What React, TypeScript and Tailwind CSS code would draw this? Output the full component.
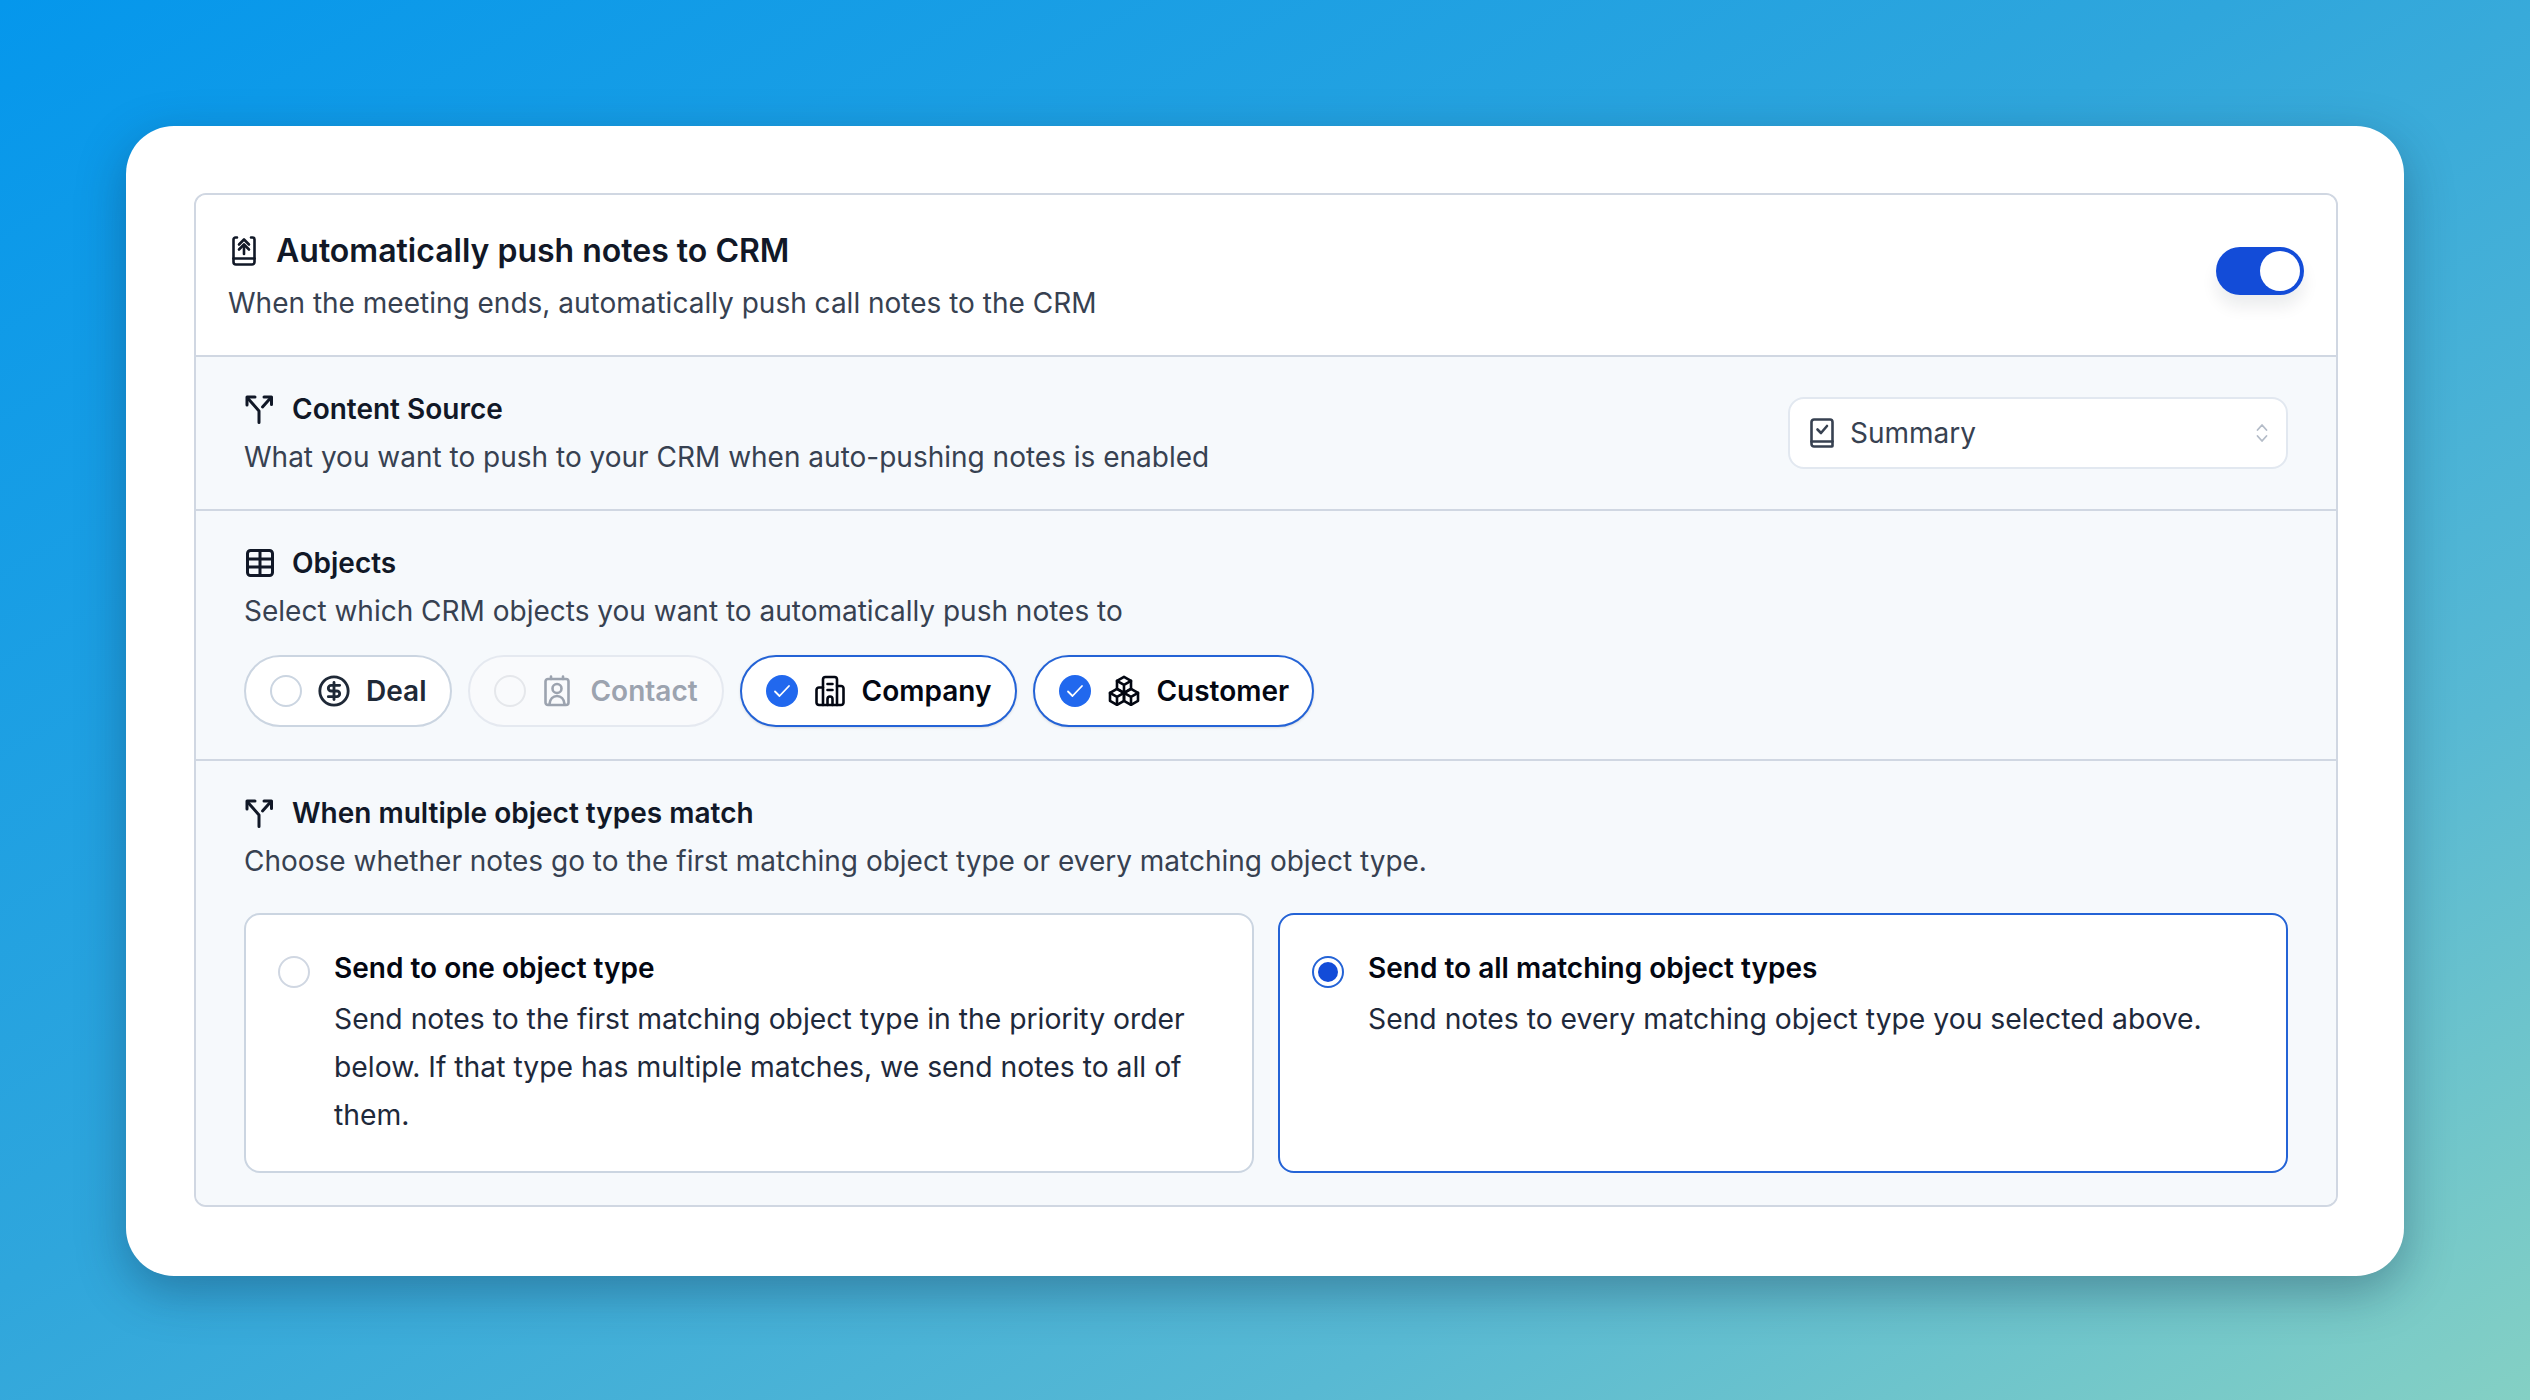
import { CircleDollarSign } from 'lucide-react'

function Ico({ w, h, children, className }: { w: number; h: number; children: React.ReactNode; className?: string }) {
  return (
    <svg width={w} height={h} viewBox={`0 0 ${w} ${h}`} fill="none" stroke="currentColor" strokeWidth={2.6} strokeLinecap="round" strokeLinejoin="round" className={`shrink-0 ${className ?? ''}`}>
      {children}
    </svg>
  )
}

function BookUpIcon() {
  return (
    <Ico w={26} h={32} className="ml-[3px] text-[#111827]">
      <path d="M6 2.500H4.500A2 2 0 0 0 2.500 4.500V27a2.500 2.500 0 0 0 2.500 2.500h16a2.500 2.500 0 0 0 2.500-2.500V4.500a2 2 0 0 0-2-2H20" />
      <path d="M2.500 23.500h21" />
      <path d="M8 9.500l5-5 5 5" />
      <path d="M8 14.500l5-5 5 5" />
      <path d="M13 10v9" />
    </Ico>
  )
}

function SplitIcon() {
  return (
    <Ico w={30} h={30} className="text-[#111827]">
      <path d="M15 28.500V17L4 4.500" strokeWidth={3} />
      <path d="M3 11V3h8" strokeWidth={3} />
      <path d="M18.500 13L27 3.500" strokeWidth={3} />
      <path d="M20 3h7.500v7.500" strokeWidth={3} />
    </Ico>
  )
}

function TableIcon() {
  return (
    <Ico w={28} h={28} className="ml-[2px] text-[#111827]">
      <g strokeWidth={3}>
        <rect x="1.500" y="1.500" width="25" height="25" rx="3" />
        <path d="M1.500 10h25M1.500 18h25M14 1.500v25" />
      </g>
    </Ico>
  )
}

function BookCheckIcon() {
  return (
    <Ico w={24} h={30} className="text-[#374151]">
      <path d="M4 1.500h16a2.500 2.500 0 0 1 2.500 2.500v24a.5.5 0 0 1-.5.5H4A2.500 2.500 0 0 1 1.500 26V4A2.500 2.500 0 0 1 4 1.500z" />
      <path d="M1.500 23.500h21" />
      <path d="M7.500 11.500l3.500 3.500 6-7" />
    </Ico>
  )
}

function ChevronsIcon() {
  return (
    <Ico w={12} h={20} className="text-[#b4bcc8]">
      <g strokeWidth={1.800}>
        <path d="M1.500 7L6 2l4.500 5" />
        <path d="M1.500 13l4.500 5 4.500-5" />
      </g>
    </Ico>
  )
}

function ContactIcon() {
  return (
    <Ico w={26} h={32} className="text-[#9ca3af]">
      <rect x="1.500" y="4" width="23" height="26" rx="2.500" />
      <path d="M7 1.500v2.500M19 1.500v2.500" />
      <circle cx="13" cy="13.500" r="4.500" />
      <path d="M5.500 29c.5-5 3.500-8 7.500-8s7 3 7.500 8" />
    </Ico>
  )
}

function BuildingIcon() {
  return (
    <Ico w={30} h={32} className="text-[#030712]">
      <path d="M8 30H4a2.500 2.500 0 0 1-2.500-2.500V15A2.500 2.500 0 0 1 4 12.500h4" />
      <path d="M22 11h4a2.500 2.500 0 0 1 2.500 2.500v14A2.500 2.500 0 0 1 26 30h-4" />
      <path d="M8 30V4.500A2.500 2.500 0 0 1 10.500 2h9A2.500 2.500 0 0 1 22 4.500V30z" />
      <path d="M12.500 9h5M12.500 15h5" />
      <path d="M12.500 30v-6a2.500 2.500 0 0 1 5 0v6" />
    </Ico>
  )
}

function CubesIcon() {
  return (
    <Ico w={32} h={32} className="text-[#030712]">
      <path d="M16 1.800l7 4v8l-7 4-7-4v-8z" />
      <path d="M9 5.800l7 4 7-4M16 9.800v8" />
      <path d="M9 13.800l7 4v8l-7 4-7-4v-8z" />
      <path d="M2 17.800l7 4 7-4M9 21.800v8" />
      <path d="M23 13.800l7 4v8l-7 4-7-4v-8z" />
      <path d="M16 17.800l7 4 7-4M23 21.800v8" />
    </Ico>
  )
}

function CheckDot() {
  return (
    <span className="flex h-8 w-8 shrink-0 items-center justify-center rounded-full bg-[#2168ee]">
      <svg width="18" height="14" viewBox="0 0 18 14" fill="none" stroke="white" strokeWidth={1.800} strokeLinecap="round" strokeLinejoin="round">
        <path d="M2 7.500l4.500 4.500L16 2" />
      </svg>
    </span>
  )
}

function SectionHead({ icon, title, desc }: { icon: React.ReactNode; title: string; desc: string }) {
  return (
    <div>
      <div className="flex h-9 items-center gap-[18px]">
        {icon}
        <h3 className="text-[28px] leading-9 font-semibold text-[#111827]">{title}</h3>
      </div>
      <p className="mt-3 text-[28px] leading-9 text-[#374151]">{desc}</p>
    </div>
  )
}

export default function App() {
  return (
    <div className="flex h-screen w-full items-center justify-center bg-[linear-gradient(150deg,#0597ec_0%,#2fa6dc_45%,#58b9d3_75%,#84d0c4_100%)] pt-[2px] font-[family-name:Inter,sans-serif]">
      <div className="w-[2278px] rounded-[48px] bg-white pt-[67px] pr-[66px] pb-[69px] pl-[68px] shadow-[0_16px_48px_rgba(15,40,70,0.35)]">
        <div className="overflow-hidden rounded-[12px] border-2 border-[#d0d7e2]">
          {/* Header */}
          <div className="flex items-center justify-between bg-white pt-[36px] pr-[32px] pb-[34px] pl-[32px]">
            <div>
              <div className="flex h-10 items-center gap-[19px]">
                <BookUpIcon />
                <h2 className="text-[32px] leading-10 font-semibold text-[#111827]">Automatically push notes to CRM</h2>
              </div>
              <p className="mt-[14px] text-[28px] leading-9 text-[#374151]">When the meeting ends, automatically push call notes to the CRM</p>
            </div>
            <div className="mb-[10px] flex h-12 w-[88px] items-center justify-end rounded-full bg-[#134cd8] pr-1 shadow-[0_12px_16px_rgba(15,23,42,0.08)]">
              <span className="h-10 w-10 rounded-full bg-white" />
            </div>
          </div>

          <div className="bg-[#f6f9fc]">
            {/* Content source */}
            <div className="flex items-center justify-between border-t-2 border-[#d0d7e2] pt-[34px] pr-[48px] pb-[34px] pl-[48px]">
              <SectionHead icon={<SplitIcon />} title="Content Source" desc="What you want to push to your CRM when auto-pushing notes is enabled" />
              <div className="flex h-[72px] w-[500px] items-center rounded-[16px] border-2 border-[#e2e8f0] bg-white pr-[18px] pl-[20px]">
                <BookCheckIcon />
                <span className="ml-[16px] flex-1 text-[28px] text-[#374151]">Summary</span>
                <ChevronsIcon />
              </div>
            </div>

            {/* Objects */}
            <div className="border-t-2 border-[#d0d7e2] pt-[34px] pr-[48px] pb-[32px] pl-[48px]">
              <SectionHead icon={<TableIcon />} title="Objects" desc="Select which CRM objects you want to automatically push notes to" />
              <div className="mt-[26px] flex gap-4">
                <div className="flex h-[72px] items-center rounded-full border-2 border-[#cbd5e1] bg-white pr-[24px] pl-[24px]">
                  <span className="h-8 w-8 rounded-full border-2 border-[#cbd5e1]" />
                  <CircleDollarSign size={34} strokeWidth={2} className="ml-[15px] text-[#1f2937]" />
                  <span className="ml-[15px] text-[28px] font-semibold text-[#1f2937]">Deal</span>
                </div>
                <div className="flex h-[72px] items-center rounded-full border-2 border-[#e5e9f0] bg-[#f9fafc] pr-[24px] pl-[24px]">
                  <span className="h-8 w-8 rounded-full border-2 border-[#e5e7eb]" />
                  <span className="ml-[18px]"><ContactIcon /></span>
                  <span className="ml-[20px] text-[28px] font-semibold text-[#9ca3af]">Contact</span>
                </div>
                <div className="flex h-[72px] items-center rounded-full border-2 border-[#2463d6] bg-white pr-[24px] pl-[24px] shadow-sm">
                  <CheckDot />
                  <span className="ml-[17px]"><BuildingIcon /></span>
                  <span className="ml-[17px] text-[28px] font-semibold text-[#030712]">Company</span>
                </div>
                <div className="flex h-[72px] items-center rounded-full border-2 border-[#2463d6] bg-white pr-[23px] pl-[24px] shadow-sm">
                  <CheckDot />
                  <span className="ml-[17px]"><CubesIcon /></span>
                  <span className="ml-[16px] text-[28px] font-semibold text-[#030712]">Customer</span>
                </div>
              </div>
            </div>

            {/* Match behaviour */}
            <div className="border-t-2 border-[#d0d7e2] pt-[34px] pr-[48px] pb-[32px] pl-[48px]">
              <SectionHead icon={<SplitIcon />} title="When multiple object types match" desc="Choose whether notes go to the first matching object type or every matching object type." />
              <div className="mt-[34px] grid grid-cols-2 gap-[24px]">
                <div className="flex h-[260px] gap-[24px] rounded-[16px] border-2 border-[#cbd5e1] bg-white pt-[35px] pr-[32px] pl-[32px]">
                  <span className="mt-[6px] h-8 w-8 shrink-0 rounded-full border-2 border-[#d0d7e2]" />
                  <div>
                    <h4 className="text-[28px] leading-9 font-semibold text-[#030712]">Send to one object type</h4>
                    <p className="mt-[9px] text-[28.3px] leading-[48px] text-[#1e293b]">Send notes to the first matching object type in the priority order below. If that type has multiple matches, we send notes to all of them.</p>
                  </div>
                </div>
                <div className="flex h-[260px] gap-[24px] rounded-[16px] border-2 border-[#2463d6] bg-white pt-[35px] pr-[32px] pl-[32px]">
                  <span className="mt-[6px] flex h-8 w-8 shrink-0 items-center justify-center rounded-full border-2 border-[#2463d6]">
                    <span className="h-5 w-5 rounded-full bg-[#134cd8]" />
                  </span>
                  <div>
                    <h4 className="text-[28px] leading-9 font-semibold text-[#030712]">Send to all matching object types</h4>
                    <p className="mt-[9px] text-[28.3px] leading-[48px] text-[#1e293b]">Send notes to every matching object type you selected above.</p>
                  </div>
                </div>
              </div>
            </div>
          </div>
        </div>
      </div>
    </div>
  )
}
